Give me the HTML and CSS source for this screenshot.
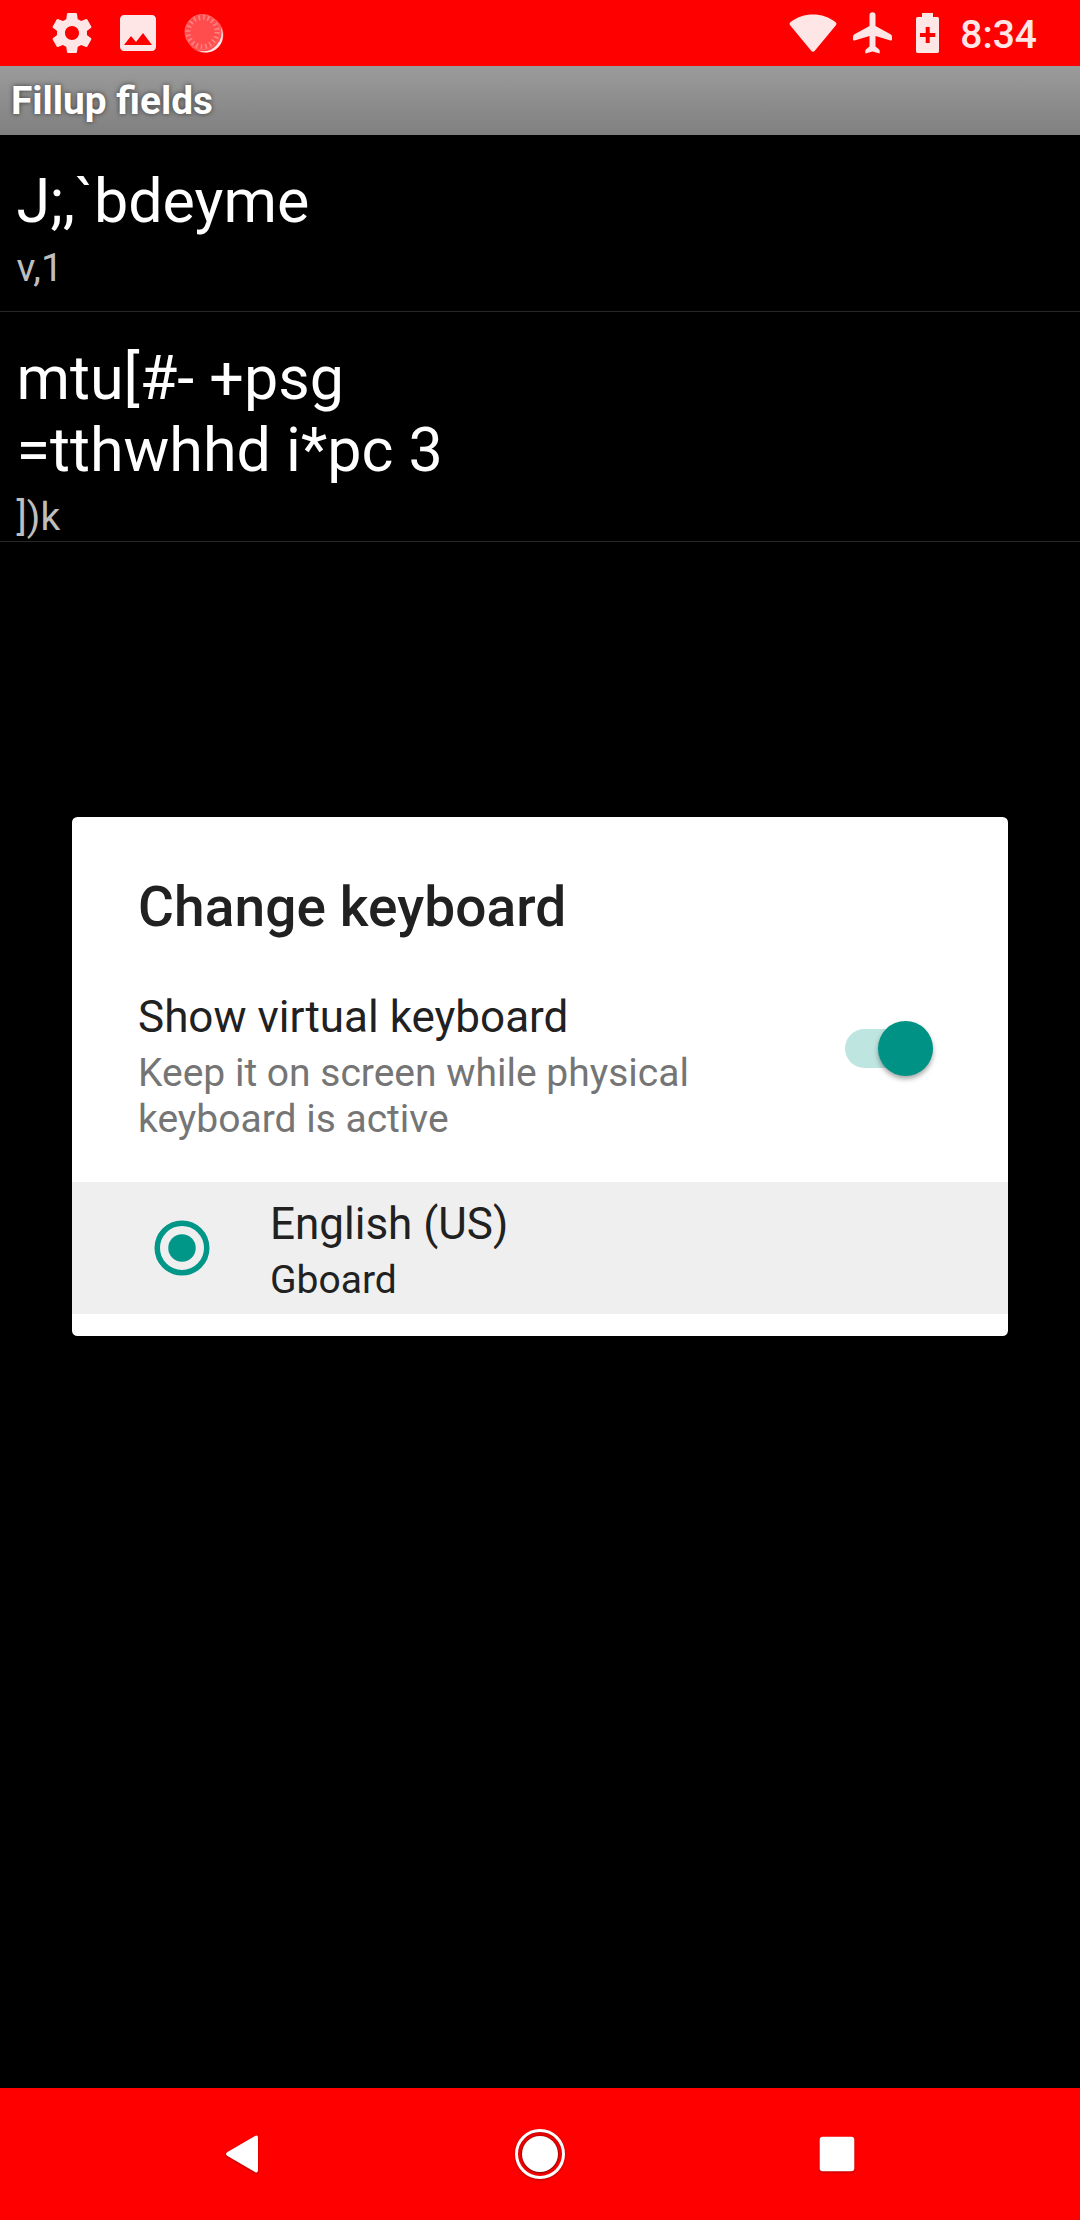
FILE: index.html
```html
<!DOCTYPE html>
<html lang="en">
<head>
<meta charset="utf-8">
<title>Fillup fields</title>
<link rel="stylesheet" href="styles.css">
</head>
<body>
<div class="screen">
  <header class="status-bar">
    <div class="notifications">
      <svg class="icon" viewBox="0 0 24 24"><path d="M19.43 12.98c.04-.32.07-.64.07-.98s-.03-.66-.07-.98l2.11-1.65c.19-.15.24-.42.12-.64l-2-3.46c-.12-.22-.39-.3-.61-.22l-2.49 1c-.52-.4-1.08-.73-1.69-.98l-.38-2.65C14.46 2.18 14.25 2 14 2h-4c-.25 0-.46.18-.49.42l-.38 2.65c-.61.25-1.17.59-1.69.98l-2.49-1c-.23-.09-.49 0-.61.22l-2 3.46c-.13.22-.07.49.12.64l2.11 1.65c-.04.32-.07.65-.07.98s.03.66.07.98l-2.11 1.65c-.19.15-.24.42-.12.64l2 3.46c.12.22.39.3.61.22l2.49-1c.52.4 1.08.73 1.69.98l.38 2.65c.03.24.24.42.49.42h4c.25 0 .46-.18.49-.42l.38-2.65c.61-.25 1.17-.59 1.69-.98l2.49 1c.23.09.49 0 .61-.22l2-3.46c.12-.22.07-.49-.12-.64l-2.11-1.65zM12 15.5c-1.93 0-3.5-1.57-3.5-3.5s1.57-3.5 3.5-3.5 3.5 1.57 3.5 3.5-1.57 3.5-3.5 3.5z"/></svg>
      <svg class="icon" viewBox="0 0 24 24"><path d="M21 19V5c0-1.1-.9-2-2-2H5c-1.1 0-2 .9-2 2v14c0 1.1.9 2 2 2h14c1.1 0 2-.9 2-2zM8.5 13.5l2.5 3.01L14.500 12l4.500 6H5l3.500-4.500z"/></svg>
      <svg class="icon" viewBox="0 0 48 48">
        <circle class="dial-halo" cx="25" cy="25.500" r="18.500"/>
        <circle class="dial-face" cx="22.500" cy="23" r="17.500"/>
        <circle class="dial-ticks" cx="22.500" cy="23" r="14.500"/>
        <path class="dial-crescent" d="M40.600 18A17 17 0 0 1 17.500 41.300A18.500 18.500 0 0 0 40.600 18z"/>
      </svg>
    </div>
    <div class="system">
      <svg class="wifi" viewBox="0 0 48 38"><path d="M1.300 8.200C14 -2.200 34 -2.200 46.700 8.200Q48.200 9.500 46.700 11.400L26 36.500Q24 39 22 36.500L1.300 11.400Q-.200 9.500 1.300 8.200z"/></svg>
      <svg class="plane" viewBox="0 0 39 42"><path d="M39 27.500V24.500Q39 23 37.500 22.200L22.500 14V3.200a3 3 0 0 0-6 0V14L1.500 22.200Q0 23 0 24.500V27.500Q0 28.800 1.500 28.400L16.500 24V34.500L13.400 37Q12.300 38 12.300 39V41.500L19.500 39.500L26.700 41.500V39Q26.700 38 25.600 37L22.500 34.500V24L37.500 28.400Q39 28.800 39 27.500z"/></svg>
      <svg class="battery" viewBox="0 0 23 40"><path fill-rule="evenodd" d="M6 0H17V4H21.500Q23 4 23 6V38Q23 40 21.500 40H1.500Q0 40 0 38V6Q0 4 1.500 4H6zM9.700 14V20H4V24H9.700V30H13.700V24H19.300V20H13.700V14z"/></svg>
      <span class="clock">8:34</span>
    </div>
  </header>

  <div class="title-bar">Fillup fields</div>

  <main class="list">
    <div class="item item-tall">
      <div class="item-title">J;,`bdeyme</div>
      <div class="item-sub">v,1</div>
    </div>
    <div class="item">
      <div class="item-title">mtu[#- +psg<br>=tthwhhd i*pc 3</div>
      <div class="item-sub">])k</div>
    </div>
  </main>

  <section class="dialog">
    <h1 class="dialog-title">Change keyboard</h1>
    <div class="switch-row">
      <div class="switch-text">
        <div class="row-title">Show virtual keyboard</div>
        <div class="row-note">Keep it on screen while physical keyboard is active</div>
      </div>
      <div class="switch"><div class="thumb"></div></div>
    </div>
    <div class="choice">
      <svg class="radio" viewBox="0 0 24 24"><circle cx="12" cy="12" r="9" fill="none" stroke="#009688" stroke-width="2"/><circle cx="12" cy="12" r="5" fill="#009688"/></svg>
      <div class="choice-text">
        <div class="row-title">English (US)</div>
        <div class="choice-sub">Gboard</div>
      </div>
    </div>
  </section>

  <nav class="nav-bar">
    <svg class="nav-icon" viewBox="0 0 66 66"><path d="M48 17V49Q48 52.500 45 50.900L17.500 35Q14.500 33 17.500 31L45 15.100Q48 13.500 48 17z"/></svg>
    <svg class="nav-icon" viewBox="0 0 66 66"><circle class="home-ring" cx="33" cy="33" r="23.500"/><circle class="home-dot" cx="33" cy="33" r="18"/></svg>
    <svg class="nav-icon" viewBox="0 0 66 66"><rect x="15.700" y="15.700" width="34.600" height="34.600" rx="3"/></svg>
  </nav>
</div>
</body>
</html>
```
FILE: styles.css
```css
* {
  box-sizing: border-box;
}

body {
  margin: 0;
  background: #000;
  font-family: Roboto, "Liberation Sans", sans-serif;
}

.screen {
  position: relative;
  display: flex;
  flex-direction: column;
  width: 1080px;
  height: 2220px;
  overflow: hidden;
  background: #000;
}

.status-bar {
  display: flex;
  align-items: center;
  justify-content: space-between;
  height: 66px;
  padding: 0 43px 0 48px;
  background: #f00;
}

.notifications,
.system {
  display: flex;
  align-items: center;
}

.notifications {
  gap: 18px;
}

.status-bar svg {
  display: block;
  fill: #ffe6e6;
}

.icon {
  width: 48px;
  height: 48px;
}

.status-bar .dial-halo {
  fill: rgba(255, 255, 255, 0.3);
}

.status-bar .dial-crescent {
  fill: #ffe6e6;
}

.status-bar .dial-face {
  fill: #ff4c4c;
  stroke: #ff6666;
  stroke-width: 1;
}

.status-bar .dial-ticks {
  fill: none;
  stroke: #ff8080;
  stroke-width: 5;
  stroke-dasharray: 1.7 2.855;
}

.wifi {
  width: 48px;
  height: 38px;
  margin-right: 16px;
}

.plane {
  width: 39px;
  height: 42px;
  margin-right: 24px;
}

.battery {
  width: 23px;
  height: 40px;
  margin-right: 21px;
}

.clock {
  color: #ffe6e6;
  font-size: 39px;
  font-weight: 500;
  line-height: 46px;
  padding-top: 3px;
}

.title-bar {
  height: 69px;
  padding: 12px 11px 0;
  background: linear-gradient(#9b9b9b, #808080);
  color: #fff;
  font-size: 38.8px;
  font-weight: 700;
  line-height: 46px;
  text-shadow: 0 0 5px rgba(0, 0, 0, 0.6);
}

.list {
  flex: 1;
}

.item {
  padding: 30px 16.5px 1px;
  border-bottom: 1px solid #262626;
}

.item-tall {
  padding-bottom: 20px;
}

.item-title {
  color: #fff;
  font-size: 61px;
  line-height: 72px;
}

.item-sub {
  margin-top: 8px;
  color: #bebebe;
  font-size: 39px;
  line-height: 46px;
}

.dialog {
  position: absolute;
  top: 817px;
  left: 72px;
  width: 936px;
  height: 519px;
  padding-top: 58px;
  overflow: hidden;
  border-radius: 5.5px;
  background: #fff;
  color: #212121;
}

.dialog-title {
  margin: 0 66px 52px;
  font-size: 55px;
  font-weight: 500;
  letter-spacing: 0.1px;
  line-height: 64px;
}

.switch-row {
  display: flex;
  justify-content: space-between;
  height: 191px;
  padding: 0 75px 0 66px;
}

.switch-text {
  width: 600px;
}

.row-title {
  font-size: 44px;
  line-height: 52px;
}

.row-note {
  margin-top: 7px;
  color: #757575;
  font-size: 39px;
  line-height: 46px;
}

.switch {
  display: flex;
  align-items: center;
  justify-content: flex-end;
  width: 88px;
  height: 39px;
  margin-top: 38px;
  border-radius: 20px;
  background: #bfe5e1;
}

.thumb {
  flex: none;
  width: 55px;
  height: 55px;
  border-radius: 50%;
  background: #009385;
  box-shadow: 0 3px 5px rgba(0, 0, 0, 0.35);
}

.choice {
  display: flex;
  align-items: center;
  gap: 55px;
  height: 132px;
  padding-left: 77px;
  background: #efefef;
}

.radio {
  width: 66px;
  height: 66px;
}

.choice-text {
  height: 100px;
}

.choice-sub {
  margin-top: 7px;
  font-size: 39px;
  line-height: 46px;
}

.nav-bar {
  display: flex;
  align-items: center;
  justify-content: space-between;
  height: 132px;
  padding: 0 210px;
  background: #f00;
}

.nav-icon {
  width: 66px;
  height: 66px;
  fill: #fff;
  filter: drop-shadow(0 1px 1px rgba(0, 0, 0, 0.3));
}

.home-ring {
  fill: none;
  stroke: #fff;
  stroke-width: 3;
}

.home-dot {
  filter: drop-shadow(0 0 1px rgba(0, 0, 0, 0.6));
}
```
